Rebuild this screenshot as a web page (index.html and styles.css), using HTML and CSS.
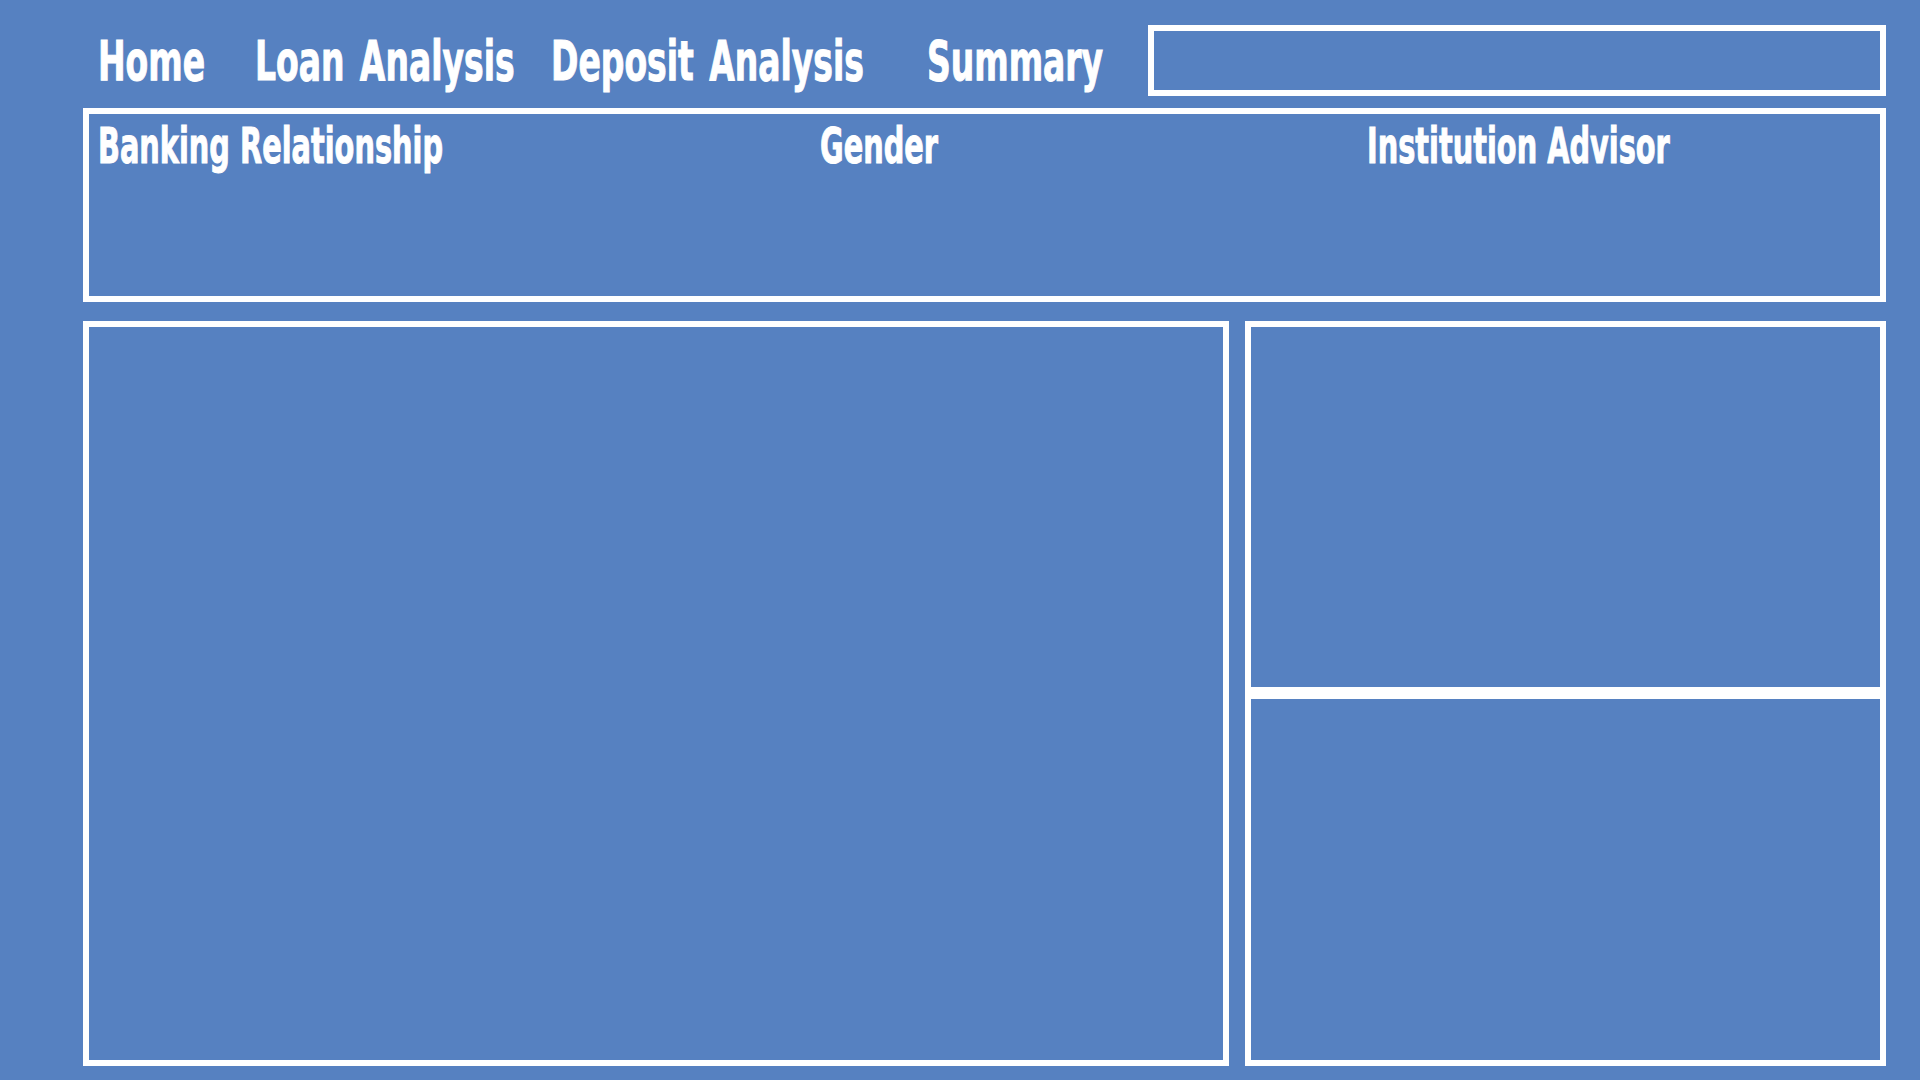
FILE: index.html
```html
<!DOCTYPE html>
<html lang="en">
<head>
<meta charset="utf-8">
<title>Banking Dashboard</title>
<link rel="stylesheet" href="styles.css">
</head>
<body>
<div class="page">
  <header class="nav">
    <a class="nav-item nav-home"><span class="label">Home</span></a>
    <a class="nav-item nav-loan"><span class="label">Loan Analysis</span></a>
    <a class="nav-item nav-deposit"><span class="label">Deposit Analysis</span></a>
    <a class="nav-item nav-summary"><span class="label">Summary</span></a>
    <div class="search-box"></div>
  </header>
  <section class="filters">
    <div class="filter"><span class="filter-label">Banking Relationship</span></div>
    <div class="filter"><span class="filter-label">Gender</span></div>
    <div class="filter"><span class="filter-label">Institution Advisor</span></div>
  </section>
  <main class="content">
    <div class="panel panel-main"></div>
    <div class="side">
      <div class="panel panel-side"></div>
      <div class="panel panel-side"></div>
    </div>
  </main>
</div>
</body>
</html>
```
FILE: styles.css
```css
* { box-sizing: border-box; }
html, body {
  margin: 0;
  padding: 0;
  width: 1920px;
  height: 1080px;
  overflow: hidden;
  background: #5681c1;
}
body {
  font-family: "DejaVu Sans Condensed", "DejaVu Sans", "Liberation Sans", sans-serif;
  font-weight: 700;
  color: #ffffff;
}
.page {
  padding: 25px 34px 0 83px;
  display: flex;
  flex-direction: column;
}
.nav {
  display: grid;
  grid-template-columns: 15px 157px 296px 376px 221px 1fr;
  height: 71px;
}
.nav-home { grid-column: 2; }
.nav-item {
  display: block;
  font-size: 56px;
  line-height: 71px;
  height: 71px;
  white-space: nowrap;
  color: #ffffff;
  text-decoration: none;
}
.label,
.filter-label {
  display: inline-block;
  transform-origin: 0 50%;
  -webkit-text-stroke: 1px #ffffff;
}
.label {
  transform: scaleX(0.655);
  word-spacing: 6px;
}
.filter-label {
  transform: scaleX(0.64);
}
.search-box {
  border: 6px solid #ffffff;
  height: 71px;
}
.filters {
  margin-top: 12px;
  height: 194px;
  border: 6px solid #ffffff;
  display: grid;
  grid-template-columns: 722px 547px 1fr;
  padding: 2px 0 0 9px;
}
.filter-label {
  font-size: 50px;
  line-height: 60px;
  white-space: nowrap;
}
.content {
  margin-top: 19px;
  height: 745px;
  display: grid;
  grid-template-columns: 1146px 641px;
  column-gap: 16px;
}
.panel {
  border: 6px solid #ffffff;
}
.side {
  display: grid;
  grid-template-rows: 372px 373px;
}
```
